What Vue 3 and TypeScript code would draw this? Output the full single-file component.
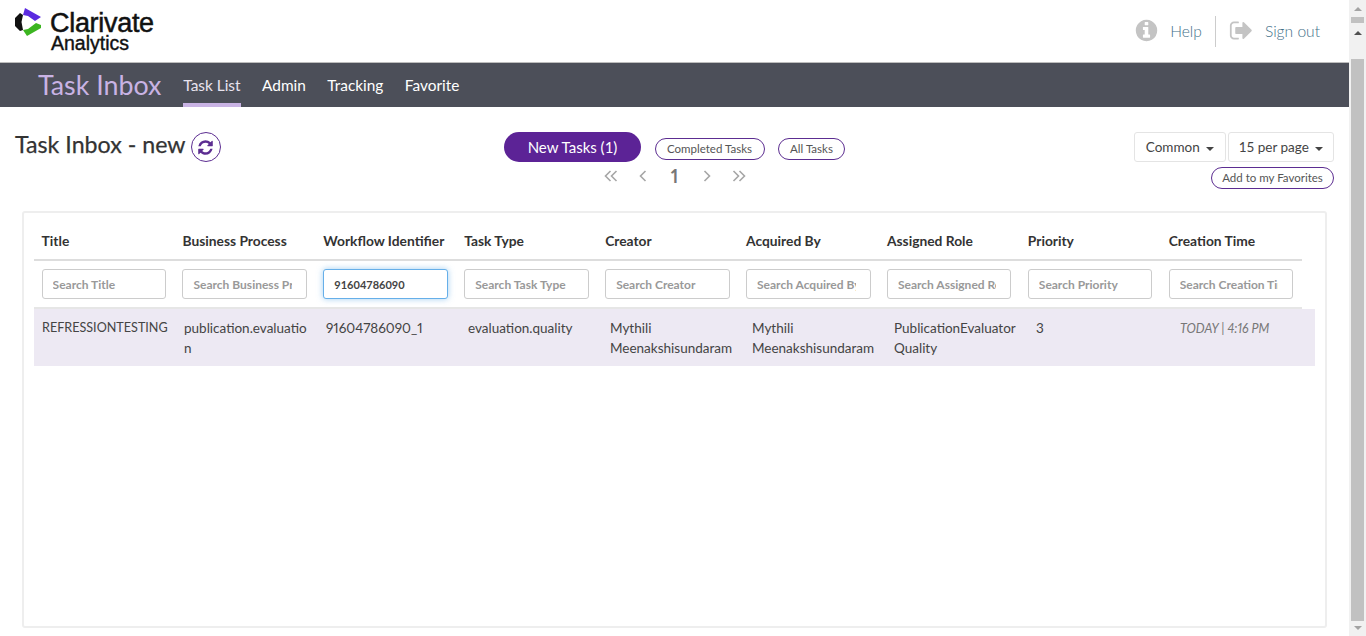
<script setup lang="ts">
import { ref } from "vue";

interface Column {
	title: string;
	search: string;
}

const columns: Column[] = [
	{ title: "Title", search: "Search Title" },
	{ title: "Business Process", search: "Search Business Process" },
	{ title: "Workflow Identifier", search: "Search Workflow Identifier" },
	{ title: "Task Type", search: "Search Task Type" },
	{ title: "Creator", search: "Search Creator" },
	{ title: "Acquired By", search: "Search Acquired By" },
	{ title: "Assigned Role", search: "Search Assigned Role" },
	{ title: "Priority", search: "Search Priority" },
	{ title: "Creation Time", search: "Search Creation Time" }
];

const row = [
	"publication.evaluation",
	"91604786090_1",
	"evaluation.quality",
	"Mythili Meenakshisundaram",
	"Mythili Meenakshisundaram",
	"PublicationEvaluator Quality",
	"3"
];

const links = ["Task List", "Admin", "Tracking", "Favorite"];
const activeLink = ref("Task List");
const workflowSearch = ref("91604786090");
</script>

<template>
	<div class="window">
		<div class="page">
			<header class="top">
				<svg class="logo" viewBox="0 0 142 48" width="142" height="48">
					<path d="M10 0 L26 9 L20 13 L13 8 L8 7 Z" fill="#5b2be0" />
					<path d="M8 22 L12 28 L26 20 L26 17 L21 15 L13 21 Z" fill="#3cb521" />
					<path d="M5 5 L8 7 L6.5 14 L8 22 L5 23 L0 18 L0 10 Z" fill="#111" />
					<text class="logo-name" x="35" y="24">Clarivate</text>
					<text class="logo-sub" x="36" y="42">Analytics</text>
				</svg>
				<div class="top-actions">
					<a class="top-link">
						<svg viewBox="0 0 1792 1792" width="25" height="25" fill="#c4c4c4">
							<path d="M1152 1376v-160q0-14-9-23t-23-9h-96v-512q0-14-9-23t-23-9h-320q-14 0-23 9t-9 23v160q0 14 9 23t23 9h96v320h-96q-14 0-23 9t-9 23v160q0 14 9 23t23 9h448q14 0 23-9t9-23zm-128-896v-160q0-14-9-23t-23-9h-192q-14 0-23 9t-9 23v160q0 14 9 23t23 9h192q14 0 23-9t9-23zm640 416q0 209-103 385.5t-279.5 279.5-385.5 103-385.5-103-279.5-279.5-103-385.5 103-385.5 279.5-279.5 385.5-103 385.5 103 279.5 279.5 103 385.5z" />
						</svg>
						Help
					</a>
					<span class="top-divider"></span>
					<a class="top-link">
						<svg viewBox="0 0 1792 1792" width="25" height="25" fill="#c4c4c4">
							<path d="M704 1440q0 4 1 20t.5 26.5-3 23.5-10 19.5-20.5 6.5h-320q-119 0-203.5-84.5t-84.5-203.5v-704q0-119 84.5-203.5t203.5-84.5h320q13 0 22.5 9.5t9.5 22.5q0 4 1 20t.5 26.5-3 23.5-10 19.5-20.5 6.5h-320q-66 0-113 47t-47 113v704q0 66 47 113t113 47h312l11.5 1 11.5 3 8 5.5 7 9 2 13.5zm928-544q0 26-19 45l-544 544q-19 19-45 19t-45-19-19-45v-288h-448q-26 0-45-19t-19-45v-384q0-26 19-45t45-19h448v-288q0-26 19-45t45-19 45 19l544 544q19 19 19 45z" />
						</svg>
						Sign out
					</a>
				</div>
			</header>

			<nav class="nav">
				<span class="brand">Task Inbox</span>
				<a
					v-for="link in links"
					:key="link"
					:class="{ active: activeLink === link }"
					class="nav-link"
					@click="activeLink = link"
				>
					{{ link }}
				</a>
			</nav>

			<section class="toolbar">
				<div class="heading">
					<h1>Task Inbox - new</h1>
					<button class="refresh" type="button" aria-label="Refresh">
						<svg viewBox="0 0 1792 1792" width="17" height="17" fill="#5c2d91">
							<path d="M1639 1056q0 5-1 7-64 268-268 434.5t-478 166.5q-146 0-282.5-55t-243.5-157l-129 129q-19 19-45 19t-45-19-19-45v-448q0-26 19-45t45-19h448q26 0 45 19t19 45-19 45l-137 137q71 66 161 102t187 36q134 0 250-65t186-179q11-17 53-117 8-23 30-23h192q13 0 22.5 9.5t9.5 22.5zm25-800v448q0 26-19 45t-45 19h-448q-26 0-45-19t-19-45 19-45l138-138q-148-137-349-137-134 0-250 65t-186 179q-11 17-53 117-8 23-30 23h-199q-13 0-22.5-9.5t-9.5-22.5v-7q65-268 270-434.5t480-166.5q146 0 284 55.5t245 156.5l130-129q19-19 45-19t45 19 19 45z" />
						</svg>
					</button>
				</div>

				<div class="center">
					<div class="tabs">
						<button class="tab-main" type="button">New Tasks (1)</button>
						<button class="pill completed" type="button">Completed Tasks</button>
						<button class="pill all" type="button">All Tasks</button>
					</div>
					<div class="pager">
						<span class="pager-item">
							<svg viewBox="0 0 14 12" width="14" height="12"><path d="M6.5 1 L1.5 6 L6.5 11 M12.5 1 L7.5 6 L12.5 11" /></svg>
						</span>
						<span class="pager-item">
							<svg viewBox="0 0 8 12" width="8" height="12"><path d="M6.5 1 L1.5 6 L6.5 11" /></svg>
						</span>
						<span class="pager-item current">1</span>
						<span class="pager-item">
							<svg viewBox="0 0 8 12" width="8" height="12"><path d="M1.5 1 L6.5 6 L1.5 11" /></svg>
						</span>
						<span class="pager-item">
							<svg viewBox="0 0 14 12" width="14" height="12"><path d="M1.5 1 L6.5 6 L1.5 11 M7.5 1 L12.5 6 L7.5 11" /></svg>
						</span>
					</div>
				</div>

				<div class="right">
					<div class="selects">
						<button class="select common" type="button">Common <i class="caret"></i></button>
						<button class="select perpage" type="button">15 per page <i class="caret"></i></button>
					</div>
					<button class="pill favorites" type="button">Add to my Favorites</button>
				</div>
			</section>

			<section class="card">
				<div class="grid head">
					<div v-for="col in columns" :key="col.title" class="head-cell">{{ col.title }}</div>
				</div>
				<div class="grid filters">
					<div v-for="col in columns" :key="col.search" class="filter-cell">
						<input
							v-if="col.title === 'Workflow Identifier'"
							v-model="workflowSearch"
							class="search focused"
							:placeholder="col.search"
						/>
						<input v-else class="search" :placeholder="col.search" />
					</div>
				</div>
				<div class="grid-row">
					<div class="cell title">REFRESSIONTESTING</div>
					<div v-for="(cell, i) in row" :key="i" class="cell">{{ cell }}</div>
					<div class="cell time">TODAY | 4:16 PM</div>
				</div>
			</section>
		</div>

		<aside class="scrollbar">
			<i class="arrow up light"></i>
			<i class="mini-thumb"></i>
			<i class="arrow up"></i>
			<i class="thumb"></i>
			<i class="arrow down"></i>
		</aside>
	</div>
</template>

<style>
html,
body {
	margin: 0;
	height: 100%;
	overflow: hidden;
	background: #fff;
}
</style>

<style scoped>
.window {
	display: flex;
	height: 636px;
	font-family: Lato, "Open Sans", sans-serif;
	font-variant-numeric: proportional-nums;
	color: #333;
}

.page {
	flex: 1;
	min-width: 0;
	display: flex;
	flex-direction: column;
}

.top {
	height: 62px;
	display: flex;
	justify-content: space-between;
	align-items: center;
	padding: 0 29px 0 15px;
	border-bottom: 1px solid #bdbdbd;
}

.logo {
	align-self: flex-start;
	margin-top: 8px;
}

.logo text {
	font-family: "Liberation Sans", Arial, sans-serif;
	fill: #111;
	stroke: #111;
}

.logo-name {
	font-size: 27px;
	letter-spacing: -0.3px;
	stroke-width: 0.5px;
}

.logo-sub {
	font-size: 19.5px;
	stroke-width: 0.4px;
}

.top-actions {
	display: flex;
	align-items: center;
	gap: 13px;
	padding-bottom: 1px;
}

.top-link {
	display: flex;
	align-items: center;
	gap: 11px;
	font-size: 15.6px;
	font-weight: 300;
	color: #3f7089;
}

.top-divider {
	width: 1px;
	height: 31px;
	margin-top: 2px;
	background: #ccc;
}

.nav {
	height: 44px;
	background: #4c4f59;
	display: flex;
	align-items: stretch;
	padding-left: 38px;
}

.brand {
	font-size: 26.8px;
	color: #c9b3e4;
	line-height: 44px;
	margin-right: 22px;
}

.nav-link {
	font-size: 15.4px;
	color: #fff;
	line-height: 44px;
	margin-right: 21.5px;
	box-sizing: border-box;
}

.nav-link.active {
	color: #e8e3ef;
	border-bottom: 4px solid #c9b3e4;
}

.toolbar {
	display: grid;
	grid-template-columns: 1fr auto 1fr;
	padding: 25px 15px 0;
	height: 104px;
	box-sizing: border-box;
}

.heading {
	display: flex;
	align-items: flex-start;
	gap: 5px;
}

.heading h1 {
	margin: 0;
	font-size: 23.2px;
	font-weight: 400;
	line-height: 25px;
	color: #333;
	-webkit-text-stroke: 0.25px #333;
}

.refresh {
	width: 30px;
	height: 30px;
	padding: 0;
	border: 1px solid #5c2d91;
	border-radius: 50%;
	background: #fff;
	display: flex;
	align-items: center;
	justify-content: center;
}

.center {
	display: flex;
	flex-direction: column;
	align-items: center;
}

.tabs {
	display: flex;
	align-items: flex-end;
	gap: 13.5px;
	height: 30px;
}

.tab-main {
	width: 137px;
	height: 30px;
	border: 0;
	border-radius: 15px;
	background: #5c2396;
	color: #fff;
	font: 15px Lato, sans-serif;
	padding: 0;
}

.pill {
	height: 22px;
	padding: 0 0 2px;
	border: 1px solid #5c2d91;
	border-radius: 11px;
	background: #fff;
	color: #555;
	font: 11.5px Lato, sans-serif;
	white-space: nowrap;
}

.pill.completed {
	width: 110px;
	margin-bottom: 2px;
}

.pill.all {
	width: 67px;
	margin-bottom: 2px;
}

.pager {
	display: flex;
	align-items: center;
	height: 28px;
}

.pager-item {
	width: 32px;
	display: flex;
	justify-content: center;
	align-items: center;
}

.pager-item path {
	fill: none;
	stroke: #a6a6a6;
	stroke-width: 1.6;
}

.pager-item.current {
	font-size: 18px;
	font-weight: 700;
	color: #777;
}

.right {
	display: flex;
	flex-direction: column;
	align-items: flex-end;
	gap: 5px;
}

.selects {
	display: flex;
	gap: 2px;
}

.select {
	height: 30px;
	border: 1px solid #e4e4e4;
	border-radius: 3px;
	background: #fff;
	color: #444;
	font: 13.5px Lato, sans-serif;
	padding: 0;
}

.select.common {
	width: 92px;
}

.select.perpage {
	width: 106px;
}

.caret {
	display: inline-block;
	margin-left: 3px;
	vertical-align: middle;
	border-top: 4px solid #444;
	border-left: 4px solid transparent;
	border-right: 4px solid transparent;
}

.favorites {
	width: 123px;
}

.card {
	flex: 1;
	margin: 0 22px 8px;
	border: 2px solid #eeeeee;
	border-radius: 3px;
	padding: 8px 0 0 10px;
	min-height: 0;
}

.grid {
	display: grid;
	grid-template-columns: repeat(9, 1fr);
	width: 1268px;
}

.head {
	height: 38px;
	align-items: center;
	border-bottom: 2px solid #ddd;
}

.head-cell {
	padding-left: 7.6px;
	font-size: 13.8px;
	font-weight: 700;
	color: #333;
	white-space: nowrap;
}

.filters {
	height: 46px;
	border-bottom: 2px solid #e6e6e6;
	align-items: center;
}

.filter-cell {
	padding-left: 7.6px;
}

.search {
	width: 124.5px;
	height: 30px;
	box-sizing: border-box;
	border: 1px solid #ccc;
	border-radius: 3px;
	padding: 0 14px 0 10px;
	font: 700 12px Lato, sans-serif;
	color: #444;
	outline: none;
	display: block;
}

.search::placeholder {
	color: #999;
}

.search.focused {
	border-color: #66afe9;
	box-shadow: 0 0 6px rgba(102, 175, 233, 0.6);
	font-size: 11px;
}

.grid-row {
	display: grid;
	grid-template-columns: repeat(9, 142px);
	width: 1281px;
	height: 57px;
	background: #ede9f3;
}

.cell {
	padding: 9px 6px 0 8px;
	font-size: 13.5px;
	line-height: 20px;
	color: #444;
	overflow-wrap: anywhere;
	min-width: 0;
}

.cell.title {
	font-size: 12.6px;
	white-space: nowrap;
}

.time {
	font-size: 12.5px;
	font-style: italic;
	color: #777;
	padding: 10px 6px 0 10px;
	white-space: nowrap;
}

.scrollbar {
	width: 17px;
	background: #f1f1f1;
	display: flex;
	flex-direction: column;
	align-items: center;
	padding-top: 7px;
	box-sizing: border-box;
}

.arrow {
	width: 0;
	height: 0;
	border-left: 4px solid transparent;
	border-right: 4px solid transparent;
}

.arrow.up {
	border-bottom: 4px solid #505050;
}

.arrow.up.light {
	border-bottom-color: #a3a3a3;
}

.arrow.up:not(.light) {
	margin-top: 8px;
}

.arrow.down {
	border-top: 4px solid #a3a3a3;
	margin: 5px 0 6px;
}

.mini-thumb {
	width: 13px;
	height: 6px;
	background: #c1c1c1;
	margin-top: 6px;
}

.thumb {
	width: 13px;
	flex: 1;
	background: #c1c1c1;
	margin-top: 24px;
}
</style>
